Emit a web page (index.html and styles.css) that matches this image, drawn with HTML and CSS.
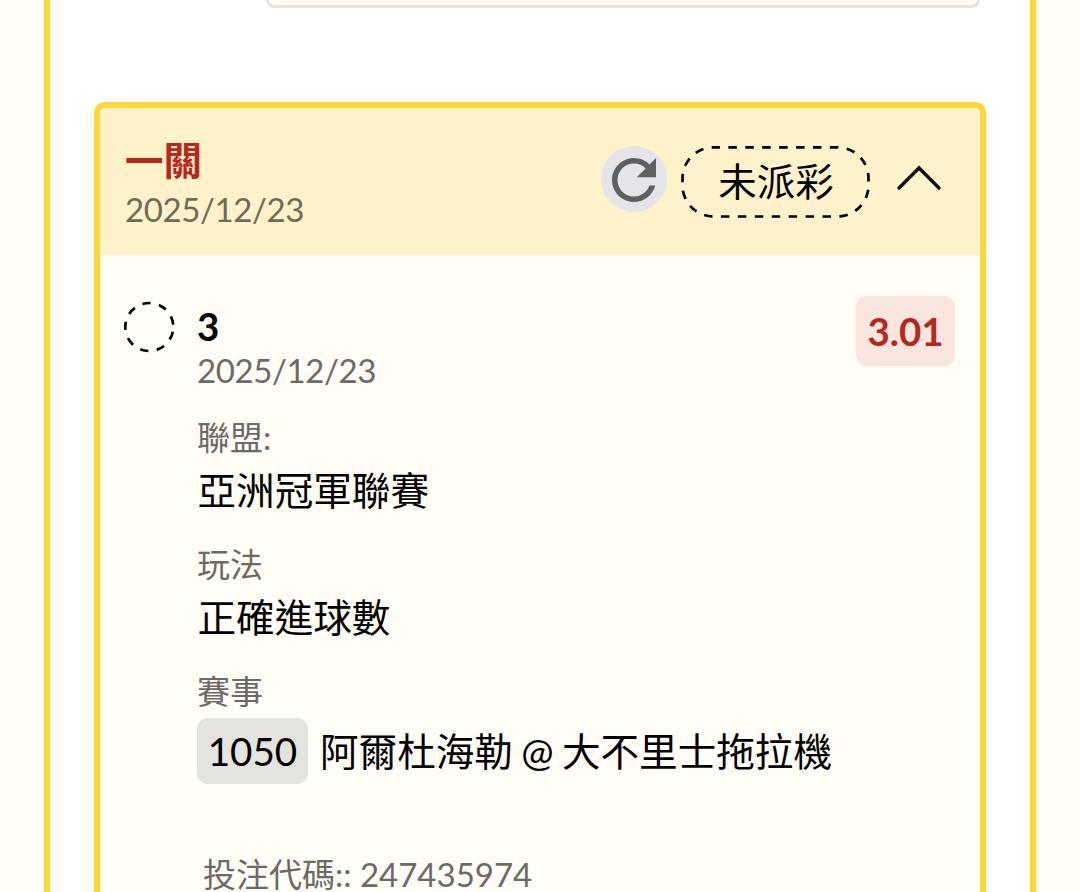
FILE: index.html
```
<!DOCTYPE html>
<html lang="zh-Hant">
<head>
    <meta charset="UTF-8">
    <meta name="viewport" content="width=device-width, initial-scale=1.0">
    <title>投注紀錄</title>
    <link rel="stylesheet" href="styles.css">
</head>
<body>
    <div class="frame">
        <div class="prev-box"></div>

        <div class="card">
            <div class="card-header">
                <div class="card-title">
                    <h2>一關</h2>
                    <p class="date">2025/12/23</p>
                </div>
                <button class="refresh">
                    <svg width="66" height="66" viewBox="0 0 24 24" fill="#5f6062">
                        <path d="M17.65 6.35A7.96 7.96 0 0 0 12 4c-4.42 0-7.99 3.58-7.99 8s3.57 8 7.99 8c3.73 0 6.84-2.55 7.73-6h-2.08A5.99 5.99 0 0 1 12 18c-3.31 0-6-2.69-6-6s2.69-6 6-6c1.66 0 3.14.69 4.22 1.78L13 11h7V4z"/>
                    </svg>
                </button>
                <div class="status">
                    <svg class="status-outline" width="190" height="74" viewBox="0 0 190 74">
                        <rect x="2.5" y="2.3" width="186" height="69.2" rx="31"/>
                    </svg>
                    <span>未派彩</span>
                </div>
                <svg class="chevron" width="46" height="30" viewBox="0 0 46 30">
                    <path d="M3 25 23 5l20 20"/>
                </svg>
            </div>

            <div class="card-body">
                <svg class="dot" width="54" height="54" viewBox="0 0 54 54">
                    <circle cx="27.3" cy="27" r="24"/>
                </svg>
                <div class="details">
                    <div class="row-top">
                        <div>
                            <h3>3</h3>
                            <p class="date">2025/12/23</p>
                        </div>
                        <span class="odds">3.01</span>
                    </div>
                    <div class="field">
                        <div class="label">聯盟:</div>
                        <div class="value">亞洲冠軍聯賽</div>
                    </div>
                    <div class="field">
                        <div class="label">玩法</div>
                        <div class="value">正確進球數</div>
                    </div>
                    <div class="field">
                        <div class="label">賽事</div>
                        <div class="value match"><span class="code">1050</span><span class="teams">阿爾杜海勒 @ 大不里士拖拉機</span></div>
                    </div>
                    <div class="bet-code">投注代碼:: 247435974</div>
                </div>
            </div>
        </div>
    </div>
</body>
</html>
```
FILE: styles.css
```
* {
    box-sizing: border-box;
}
body {
    font-family: Lato, 'Noto Sans CJK TC', sans-serif;
    background-color: #fffdf5;
    color: #000;
    margin: 0;
}
h2, h3, p {
    margin: 0;
}
.frame {
    width: 992px;
    height: 892px;
    margin-left: 44px;
    padding: 0 44px;
    background: white;
    border: 6px solid #fdd835;
    border-top: none;
    border-bottom: none;
    overflow: hidden;
}
.prev-box {
    height: 8px;
    margin: 0 6px 94px 172px;
    background: #fffdf5;
    border: 3px solid #e5e4df;
    border-top: none;
    border-radius: 0 0 11px 11px;
}
.card {
    height: 790px;
    background: #fffdf5;
    border: 6px solid #fdd835;
    border-bottom: none;
    border-radius: 11px 11px 0 0;
}
.card-header {
    display: flex;
    align-items: flex-start;
    height: 147px;
    padding: 28px 38px 0 25px;
    background: #fef2cb;
    border-radius: 5px 5px 0 0;
}
.card-title {
    flex: 1;
}
.card-title h2 {
    font-size: 38.5px;
    line-height: 48px;
    color: #b9261c;
}
.date {
    font-size: 33px;
    line-height: 44px;
    letter-spacing: -0.4px;
    color: #6b6a66;
}
.card-title .date {
    margin-top: 3px;
    color: #706a59;
}
.refresh {
    width: 66px;
    height: 66px;
    margin: 10px 13px 0 0;
    padding: 0;
    border: none;
    border-radius: 50%;
    background: #e4e5e8;
}
.refresh svg {
    display: block;
    margin-top: 1px;
}
.status {
    position: relative;
    width: 190px;
    height: 74px;
    margin: 9px 26px 0 0;
    padding-left: 2px;
    font-size: 38.5px;
    line-height: 72px;
    text-align: center;
}
.status-outline {
    position: absolute;
    top: 0;
    left: 0;
}
.status-outline rect {
    fill: none;
    stroke: #000;
    stroke-width: 2.7;
    stroke-dasharray: 8.5 8.43;
    stroke-dashoffset: 2.1;
}
.chevron {
    margin-top: 27px;
}
.chevron path {
    fill: none;
    stroke: #111;
    stroke-width: 3.4;
    stroke-linecap: round;
}
.card-body {
    display: flex;
    padding: 41px 25px 0 22px;
}
.dot {
    flex: none;
    margin: 4px 21px 0 0;
}
.dot circle {
    fill: none;
    stroke: #000;
    stroke-width: 2.7;
    stroke-dasharray: 8.3 8.455;
    stroke-dashoffset: -4.9;
}
.details {
    flex: 1;
}
.row-top {
    display: flex;
    justify-content: space-between;
    align-items: flex-start;
    height: 96px;
}
.row-top h3 {
    font-size: 38.5px;
    line-height: 46px;
    margin-top: 7px;
}
.row-top .date {
    margin-top: -1px;
}
.odds {
    width: 99px;
    border-radius: 11px;
    background: #f8e6df;
    color: #b9261c;
    font-size: 38.5px;
    font-weight: bold;
    line-height: 70px;
    text-align: center;
}
.field {
    height: 127px;
    padding-top: 20px;
}
.label {
    font-size: 33px;
    line-height: 50px;
    color: #6b6a66;
}
.value {
    padding-left: 0.5px;
    font-size: 38.6px;
    line-height: 57px;
}
.match {
    display: flex;
    align-items: center;
    margin-top: 2px;
    padding-left: 0;
    line-height: 66px;
}
.code {
    width: 111px;
    margin-right: 12px;
    border-radius: 11px;
    background: #e5e3dd;
    text-align: center;
}
.teams {
    word-spacing: -1.5px;
}
.bet-code {
    padding: 84px 0 0 6px;
    font-size: 33px;
    line-height: 34px;
    color: #6b6a66;
}
```
